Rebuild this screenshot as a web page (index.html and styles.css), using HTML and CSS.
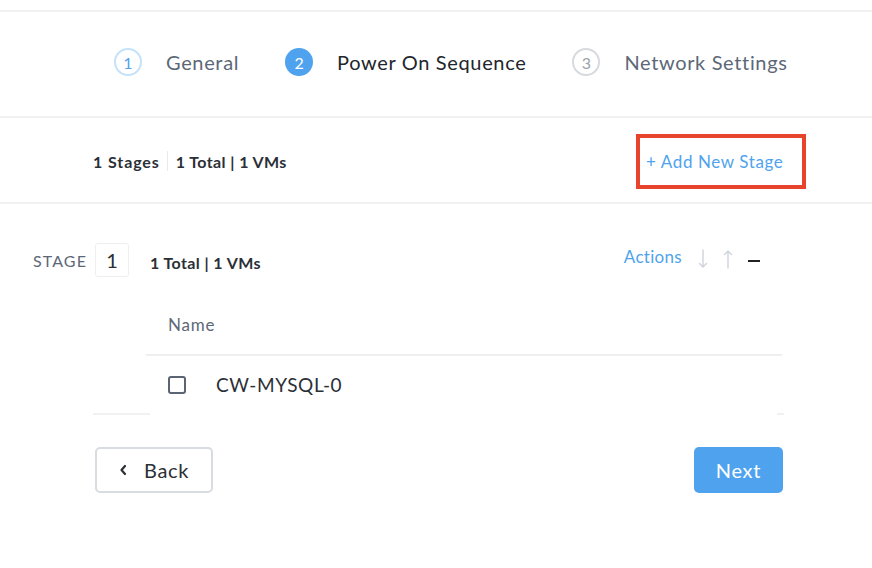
FILE: index.html
```html
<!DOCTYPE html>
<html>
<head>
<meta charset="utf-8">
<link rel="stylesheet" href="styles.css">
</head>
<body>
<div class="page">
  <div class="topgap"></div>
  <div class="stepper">
    <div class="step done"><span class="circle">1</span><span class="label">General</span></div>
    <div class="step active"><span class="circle">2</span><span class="label">Power On Sequence</span></div>
    <div class="step todo"><span class="circle">3</span><span class="label">Network Settings</span></div>
  </div>
  <div class="summary">
    <div class="counts"><span class="stages">1 Stages</span><span class="vsep"></span><span class="totals">1 Total | 1 VMs</span></div>
    <div class="highlight"><a class="addlink">+ Add New Stage</a></div>
  </div>
  <div class="stagearea">
    <div class="stagehead">
      <span class="stagelabel">STAGE</span>
      <span class="stagebox">1</span>
      <span class="stagecount">1 Total | 1 VMs</span>
      <div class="actions">
        <span class="actlink">Actions</span>
        <svg class="arrow" width="10" height="20" viewBox="0 0 10 20"><path d="M5 1 V18 M1.5 14.5 L5 18 L8.5 14.5" fill="none" stroke="#cfd4da" stroke-width="1.4" stroke-linecap="round" stroke-linejoin="round"/></svg>
        <svg class="arrow up" width="10" height="20" viewBox="0 0 10 20"><path d="M5 19 V2 M1.5 5.5 L5 2 L8.5 5.5" fill="none" stroke="#cfd4da" stroke-width="1.4" stroke-linecap="round" stroke-linejoin="round"/></svg>
        <span class="minus"></span>
      </div>
    </div>
    <div class="tablewrap">
      <div class="table">
        <div class="thead">Name</div>
        <div class="trow"><span class="checkbox"></span><span class="vmname">CW-MYSQL-0</span></div>
      </div>
    </div>
    <div class="scrollend"><span class="seg left"></span><span class="seg gap"></span><span class="seg right"></span></div>
  </div>
  <div class="footer">
    <button class="btn back"><svg width="8" height="12" viewBox="0 0 8 12"><path d="M6 2 L2.5 6 L6 10" fill="none" stroke="#2b2f36" stroke-width="2.2" stroke-linecap="round" stroke-linejoin="round"/></svg><span>Back</span></button>
    <button class="btn next">Next</button>
  </div>
</div>
</body>
</html>
```

FILE: styles.css
```css
* { box-sizing: border-box; }
html, body { margin: 0; padding: 0; background: #fff; }
body { font-family: "Lato", "Open Sans", sans-serif; color: #2b2f36; width: 872px; height: 568px; overflow: hidden; }

.topgap { height: 12px; border-bottom: 2px solid #f1f1f1; }

.stepper {
  height: 106px;
  display: flex;
  align-items: center;
  padding-left: 114px;
  padding-bottom: 4px;
  border-bottom: 2px solid #f1f1f1;
  gap: 46px;
}
.step { display: flex; align-items: center; gap: 24px; font-size: 20px; letter-spacing: 0.65px; }
.circle {
  width: 28px; height: 28px; border-radius: 50%;
  display: flex; align-items: center; justify-content: center;
  font-size: 16px; letter-spacing: 0;
}
.step.done .circle { border: 2px solid #c6e1fa; color: #4fa3ee; }
.step.done .label { color: #5d6877; }
.step.active .circle { background: #4fa3ee; color: #fff; }
.step.active .label { color: #22262c; }
.step.todo .circle { border: 2px solid #d7dade; color: #9aa2ad; }
.step.todo .label { color: #5d6877; }

.summary {
  height: 86px;
  display: flex;
  align-items: center;
  justify-content: space-between;
  padding-left: 93px;
  padding-right: 66px;
  padding-top: 2px;
  border-bottom: 2px solid #f1f1f1;
}
.counts { display: flex; align-items: center; font-weight: 700; font-size: 16px; color: #2b2f36; }
.stages { letter-spacing: 0.9px; }
.totals { letter-spacing: 0.4px; }
.vsep { width: 1px; height: 20px; background: #eaeaea; margin: 0 8px 0 7px; }
.highlight {
  width: 170px; height: 55px;
  border: 4px solid #e8432d;
  display: flex; align-items: center;
  padding-left: 6px;
}
.addlink { color: #4fa3ee; font-size: 17px; letter-spacing: 0.6px; }

.stagearea { padding-top: 39px; }
.stagehead { display: flex; align-items: center; padding-left: 33px; height: 34px; }
.stagelabel { font-size: 16px; color: #5d6877; letter-spacing: 1.1px; }
.stagebox {
  width: 34px; height: 34px; margin-left: 8px;
  border: 1px solid #eeeeee; border-radius: 3px;
  display: flex; align-items: center; justify-content: center;
  font-size: 20px; color: #2b2f36;
}
.stagecount { margin-left: 21px; font-weight: 700; font-size: 16px; margin-top: 4px; letter-spacing: 0.4px; }
.actions { margin-left: auto; margin-right: 112px; display: flex; align-items: center; margin-top: -7px; }
.actlink { color: #4fa3ee; font-size: 17px; letter-spacing: 0.3px; }
.arrow { margin-left: 16px; margin-top: 4px; }
.arrow.up { margin-left: 15px; }
.minus { width: 12px; height: 2px; background: #222; margin-left: 15px; margin-top: 8px; }

.tablewrap { padding-left: 146px; padding-right: 90px; margin-top: 25px; }
.thead { height: 54px; padding-left: 22px; padding-top: 12px; font-size: 17px; letter-spacing: 0.8px; color: #5d6877; border-bottom: 2px solid #efefef; }
.trow { height: 57px; display: flex; align-items: center; padding-left: 22px; }
.checkbox { width: 18px; height: 18px; border: 2px solid #5a6472; border-radius: 3px; }
.vmname { margin-left: 30px; font-size: 19px; letter-spacing: 0.6px; color: #2b2f36; }

.scrollend { display: flex; padding-left: 93px; height: 2px; }
.seg { height: 2px; }
.seg.left { width: 57px; background: #f1f1f1; }
.seg.gap { width: 627px; }
.seg.right { width: 7px; background: #f1f1f1; }

.footer { display: flex; justify-content: space-between; padding: 32px 89px 0 95px; }
.btn { height: 46px; border-radius: 5px; font-family: inherit; font-size: 20px; letter-spacing: 0.7px; display: flex; align-items: center; }
.btn.back { width: 118px; border: 2px solid #d8dbe0; background: #fff; color: #2b2f36; padding-left: 22px; gap: 17px; }
.btn.next { width: 89px; border: none; background: #4fa3ee; color: #fff; justify-content: center; }
```
